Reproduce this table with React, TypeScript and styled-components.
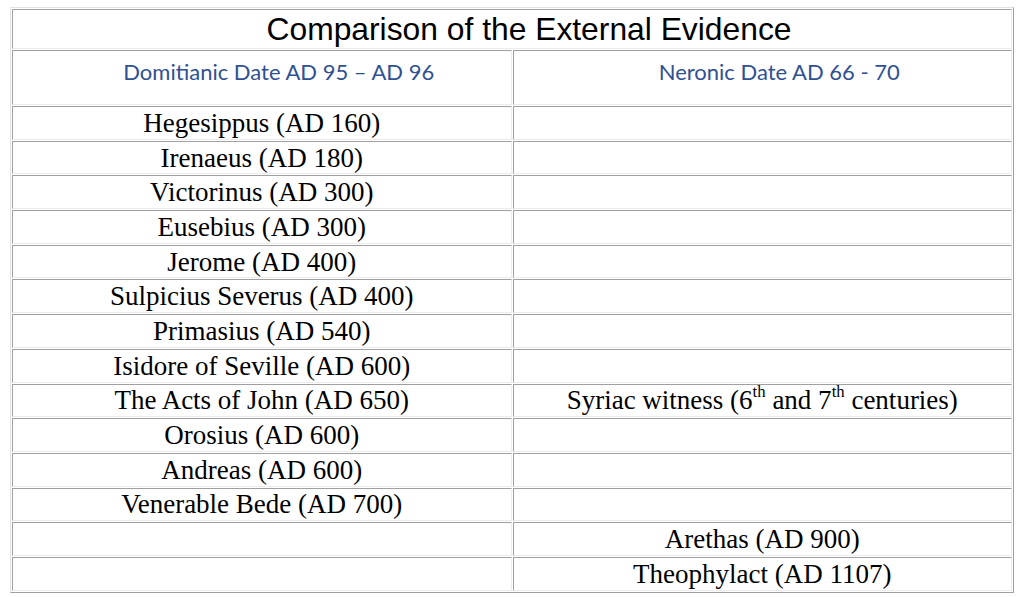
import React from "react";
import styled, { createGlobalStyle } from "styled-components";

const Global = createGlobalStyle`
  html, body { margin: 0; padding: 0; background: #ffffff; }
  body { width: 1020px; height: 597px; overflow: hidden; }
`;

const Page = styled.div`
  padding: 7px 0 0 10px;
`;

const Table = styled.table`
  width: 1004px;
  border-collapse: separate;
  border-spacing: 1px;
  border: 1px solid;
  border-color: #e3e3e3 #a0a0a0 #a0a0a0 #e3e3e3;
  table-layout: fixed;
`;

const Cell = styled.td`
  border: 1px solid;
  border-color: #a0a0a0 #ececec #ececec #a0a0a0;
  padding: 0;
  text-align: center;
  vertical-align: middle;
`;

const TitleCell = styled(Cell)`
  height: 38px;
  padding-left: 34px;
  font-family: "Liberation Sans", Arial, sans-serif;
  font-size: 31.8px;
  color: #000;
  line-height: 36px;
`;

const HeadCell = styled(Cell)`
  height: 55px;
  vertical-align: top;
  padding-top: 7px;
  padding-left: 34px;
  box-sizing: border-box;
  font-family: Lato, "Open Sans", sans-serif;
  font-size: 22px;
  color: #2f5192;
`;

const BodyCell = styled(Cell)`
  height: 30.7px;
  padding-top: 1px;
  font-family: "Liberation Serif", "Times New Roman", serif;
  font-size: 27px;
  color: #000;
  line-height: 29px;
  white-space: nowrap;
`;

const Sup = styled.sup`
  font-size: 0.62em;
  vertical-align: 0.7em;
  line-height: 0;
`;

type Row = [React.ReactNode, React.ReactNode];

const rows: Row[] = [
  ["Hegesippus (AD 160)", ""],
  ["Irenaeus (AD 180)", ""],
  ["Victorinus (AD 300)", ""],
  ["Eusebius (AD 300)", ""],
  ["Jerome (AD 400)", ""],
  ["Sulpicius Severus (AD 400)", ""],
  ["Primasius (AD 540)", ""],
  ["Isidore of Seville (AD 600)", ""],
  [
    "The Acts of John (AD 650)",
    <>
      Syriac witness (6<Sup>th</Sup> and 7<Sup>th</Sup> centuries)
    </>,
  ],
  ["Orosius (AD 600)", ""],
  ["Andreas (AD 600)", ""],
  ["Venerable Bede (AD 700)", ""],
  ["", "Arethas (AD 900)"],
  ["", "Theophylact (AD 1107)"],
];

export default function App() {
  return (
    <>
      <Global />
      <Page>
        <Table>
          <tbody>
            <tr>
              <TitleCell colSpan={2}>Comparison of the External Evidence</TitleCell>
            </tr>
            <tr>
              <HeadCell>Domitianic Date AD 95 – AD 96</HeadCell>
              <HeadCell>Neronic Date AD 66 - 70</HeadCell>
            </tr>
            {rows.map((r, i) => (
              <tr key={i}>
                <BodyCell>{r[0]}</BodyCell>
                <BodyCell>{r[1]}</BodyCell>
              </tr>
            ))}
          </tbody>
        </Table>
      </Page>
    </>
  );
}
